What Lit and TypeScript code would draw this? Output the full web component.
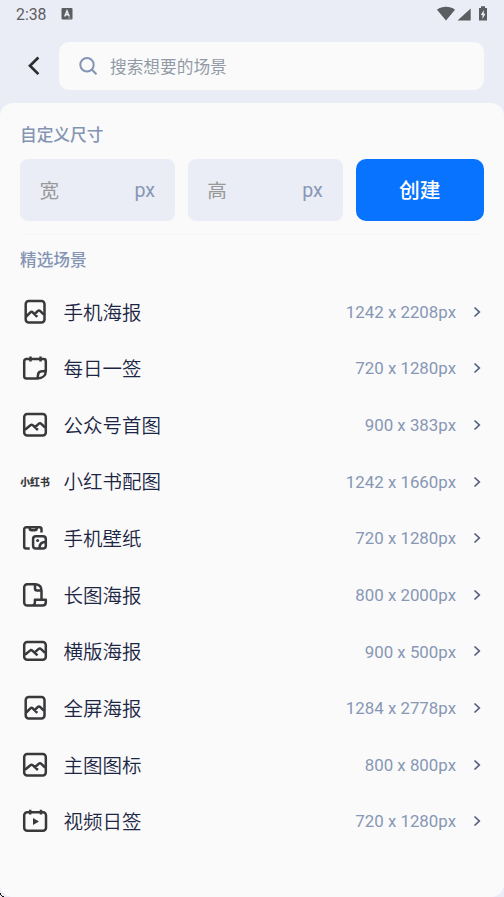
import { LitElement, html, svg, css } from "lit";
import { customElement } from "lit/decorators.js";

const icons: Record<string, unknown> = {
  portrait: svg`<rect x="4.700" y="3" width="18.800" height="21.400" rx="3"/><path d="M5.200 18.500l4.200-4.200q1.100-1 2.300 0l4.600 4.600M13.700 16.200l2.900-3.100q1.400-1.300 2.700 0l3.600 3.500"/>`,
  square: svg`<rect x="3.200" y="3" width="21.600" height="21.400" rx="3"/><path d="M4 18.800l5.400-4.600q1.100-1 2.300 0l5.200 4.800M14.200 16l3.400-3.100q1.400-1.300 2.700 0l3.800 3.600"/>`,
  landscape: svg`<rect x="3.200" y="5" width="21.600" height="17.800" rx="3"/><path d="M4 17.800l5-4.200q1.100-1 2.300 0l5.200 4.800M14 15.200l3.400-3.100q1.400-1.300 2.700 0l4 3.700"/>`,
  note: svg`<path d="M16.500 24.400H5.400a2.200 2.200 0 0 1-2.200-2.200V7.200A2.200 2.200 0 0 1 5.400 5h17.200a2.200 2.200 0 0 1 2.200 2.200v10c0 4.300-3.400 7.200-8.300 7.200zM16.400 24c1.200-2.400-.4-6.400 3.400-6.600 1.800-.1 3.200.2 4.600-1.100M9.500 2.600v4.800M19.500 2.600v4.800"/>`,
  wallpaper: svg`<path d="M8.700 24.600H5.200a2 2 0 0 1-2-2V5.200a2 2 0 0 1 2-2h13.300a2 2 0 0 1 2 2v3.300M8.700 3.500v.7q0 2 2 2h3q2 0 2-2v-.7"/><rect x="12.100" y="12.200" width="12.700" height="12.400" rx="2.800"/><path d="M18.500 24c0-4 1.800-6 5.800-6"/><circle cx="16.600" cy="16.600" r="1.500" fill="currentColor" stroke="none"/>`,
  scroll: svg`<path d="M10.500 24.600H6.200a3 3 0 0 1-3-3V6.200a3 3 0 0 1 3-3h8.300q6 .5 6 6.300v8.700M14 3.800v3.700q0 2 2 2h4M10.500 24.600h11q3.300 0 3.300-3.300v-2.500H13.900v2.600q0 3.200-3.400 3.200z"/>`,
  video: svg`<rect x="3.200" y="5.200" width="21.800" height="18.500" rx="3"/><path d="M9.200 2.800v4.600M20 2.800v4.600"/><path d="M12 11l6 3.500L12 18z" fill="currentColor" stroke="none"/>`,
};

const scenes = [
  { icon: "portrait", name: "手机海报", size: "1242 x 2208px" },
  { icon: "note", name: "每日一签", size: "720 x 1280px" },
  { icon: "square", name: "公众号首图", size: "900 x 383px" },
  { icon: "red", name: "小红书配图", size: "1242 x 1660px" },
  { icon: "wallpaper", name: "手机壁纸", size: "720 x 1280px" },
  { icon: "scroll", name: "长图海报", size: "800 x 2000px" },
  { icon: "landscape", name: "横版海报", size: "900 x 500px" },
  { icon: "portrait", name: "全屏海报", size: "1284 x 2778px" },
  { icon: "square", name: "主图图标", size: "800 x 800px" },
  { icon: "video", name: "视频日签", size: "720 x 1280px" },
];

@customElement("app-root")
export class AppRoot extends LitElement {
  static styles = css`
    :host {
      display: flex;
      flex-direction: column;
      position: relative;
      height: 897px;
      overflow: hidden;
      background: #eaedf5;
      font-family: Roboto, "Noto Sans CJK SC", sans-serif;
      color: #1c2644;
    }
    * { box-sizing: border-box; }
    svg { display: block; flex: none; }
    .status {
      display: flex;
      align-items: center;
      height: 28px;
      padding: 0 15px 0 16px;
      color: #5c5d61;
      font-size: 15.800px;
    }
    .keyboard { margin-left: 14.800px; }
    .signals { margin-left: auto; }
    header {
      display: flex;
      align-items: center;
      height: 75px;
      padding: 1px 20px 0;
    }
    .back { color: #2b2c30; }
    .search {
      display: flex;
      align-items: center;
      flex: 1;
      height: 48.500px;
      margin-left: 11px;
      padding: 0 0 1px 19px;
      gap: 12px;
      border-radius: 10px;
      background: #fafafa;
      color: #929aa8;
      font-size: 16.700px;
    }
    .search svg { color: #8494b5; margin-top: 1px; }
    main {
      flex: 1;
      padding: 21px 20px 0;
      border-radius: 13px;
      background: #fafafa;
    }
    h2 {
      margin: 0;
      height: 24px;
      line-height: 24px;
      font-size: 16.700px;
      font-weight: 500;
      color: #8494b3;
    }
    .form {
      display: grid;
      grid-template-columns: 155px 155px 128.500px;
      gap: 12.800px;
      height: 62px;
      margin-top: 11px;
    }
    .field {
      display: flex;
      align-items: center;
      justify-content: space-between;
      padding: 0 20px 0 19.500px;
      border-radius: 8px;
      background: #eaedf5;
      color: #999;
      font-size: 19.600px;
    }
    .label { padding-bottom: 1px; }
    .unit { color: #8797b5; padding-top: 1px; }
    .create {
      display: flex;
      align-items: center;
      justify-content: center;
      padding-bottom: 2px;
      border-radius: 10px;
      background: #0773ff;
      color: #fff;
      font-size: 20.800px;
      font-weight: 500;
    }
    .featured {
      margin-top: 13px;
      padding-top: 14px;
      border-top: 1px solid #f5f6f8;
      height: 37px;
    }
    .list { padding-top: 12.400px; }
    .row {
      display: flex;
      align-items: center;
      height: 56.640px;
    }
    .icon {
      display: flex;
      align-items: center;
      justify-content: center;
      width: 30px;
      height: 28px;
      color: #38393b;
    }
    .brand {
      font-size: 9.800px;
      font-weight: 900;
      white-space: nowrap;
    }
    .name {
      margin-left: 13.600px;
      padding-bottom: 1.200px;
      font-size: 19.500px;
      font-weight: 350;
    }
    .size {
      margin-left: auto;
      padding-top: .3px;
      color: #8797b5;
      font-size: 16.850px;
    }
    .chevron { margin-left: 14px; color: #525f7d; }
    .corner {
      position: absolute;
      left: 0;
      bottom: 0;
    }
  `;

  render() {
    return html`
      <div class="status">
        <span>2:38</span>
        <svg class="keyboard" width="12" height="12" viewBox="0 0 12 12">
          <rect x=".5" width="11" height="11.500" rx="1" fill="#5c5d61" />
          <path d="M3.700 8.500L6 3l2.300 5.500M4.500 6.800h3" fill="none" stroke="#eaedf5" stroke-width="1.500" />
          <path d="M7 10h3" stroke="#b0b2b8" stroke-width=".8" />
        </svg>
        <svg class="signals" width="52" height="18" viewBox="0 0 52 18" fill="#5c5d61">
          <path d="M0 4.700C5.300.9 12.700.9 18 4.700L9 15.600z" />
          <path d="M33.700 3.500v12H20.500z" />
          <path d="M42 3h2V1.300h4V3h2v12.500h-8z" />
          <path d="M46.800 5l-3 5h1.700v4l3-5.300h-1.700z" fill="#eaedf5" />
        </svg>
      </div>
      <header>
        <svg class="back" width="28" height="28" viewBox="0 0 28 28" fill="none" stroke="currentColor" stroke-width="2.700">
          <path d="M18.400 5.500L10 13.800l8.400 8.300" />
        </svg>
        <div class="search">
          <svg width="20" height="20" viewBox="0 0 20 20" fill="none" stroke="currentColor" stroke-width="2">
            <circle cx="9" cy="8.700" r="6.700" /><path d="M13.700 13.500l4.800 4.700" />
          </svg>
          <span>搜索想要的场景</span>
        </div>
      </header>
      <main>
        <h2>自定义尺寸</h2>
        <div class="form">
          <div class="field"><span class="label">宽</span><span class="unit">px</span></div>
          <div class="field"><span class="label">高</span><span class="unit">px</span></div>
          <div class="create">创建</div>
        </div>
        <h2 class="featured">精选场景</h2>
        <div class="list">
          ${scenes.map(
            (s) => html`
              <div class="row">
                <div class="icon">
                  ${s.icon === "red"
                    ? html`<span class="brand">小红书</span>`
                    : html`<svg width="28" height="28" viewBox="0 0 28 28" fill="none" stroke="currentColor" stroke-width="2.500" stroke-linejoin="round">${icons[s.icon]}</svg>`}
                </div>
                <span class="name">${s.name}</span>
                <span class="size">${s.size}</span>
                <svg class="chevron" width="14" height="14" viewBox="0 0 14 14" fill="none" stroke="currentColor" stroke-width="1.700">
                  <path d="M4.500 2.500L9.300 7l-4.800 4.500" />
                </svg>
              </div>
            `
          )}
        </div>
      </main>
      <svg class="corner" width="5" height="5" viewBox="0 0 5 5" fill="#111">
        <path d="M0 1h1v2H0zM1 3h1v1H1zM2 4h2v1H2z" />
      </svg>
    `;
  }
}
